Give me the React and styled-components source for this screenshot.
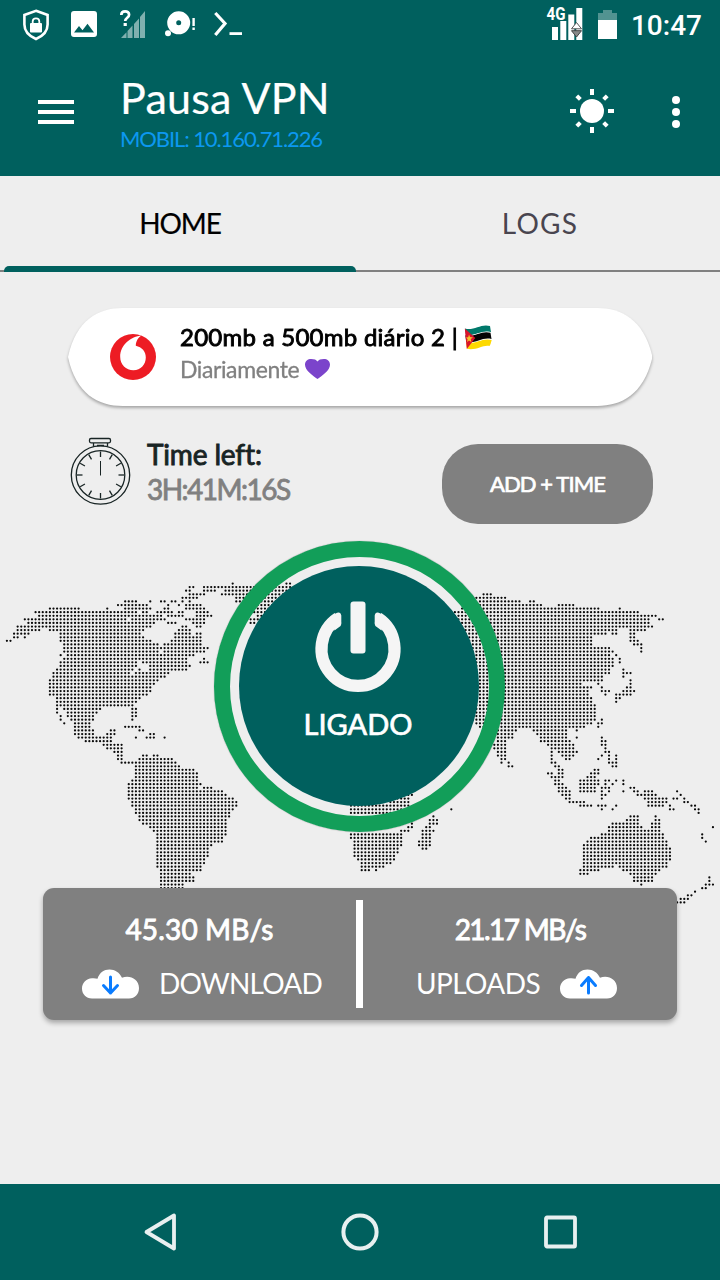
import React from "react";
import styled, { createGlobalStyle } from "styled-components";

const TEAL = "#00605e";
const GREY = "#808080";
const PAGE = "#eeeeee";

const GlobalStyle = createGlobalStyle`
  *, *::before, *::after { box-sizing: border-box; }
  body { margin: 0; background: ${PAGE}; }
  svg { display: block; flex: none; overflow: visible; }
`;

const Screen = styled.div`
  width: 720px;
  height: 1280px;
  display: flex;
  flex-direction: column;
  overflow: hidden;
  background: ${PAGE};
  font-family: Lato, "Liberation Sans", sans-serif;
`;

const Label = styled.span`
  display: block;
  margin: 0;
  white-space: nowrap;
  font-size: ${(p) => p.$size}px;
  line-height: ${(p) => p.$line || p.$size}px;
  font-weight: ${(p) => p.$weight || 400};
  letter-spacing: ${(p) => p.$track || 0}px;
  color: ${(p) => p.$color || "#fff"};
  -webkit-text-stroke: ${(p) => p.$heavy || 0}px currentColor;
`;

const StatusBar = styled.header`
  height: 48px;
  flex: none;
  display: flex;
  justify-content: space-between;
  padding: 0 18px 0 23px;
  background: ${TEAL};
`;

const StatusGroup = styled.div`
  display: flex;
  align-items: center;
  gap: ${(p) => p.$gap}px;
`;

const Clock = styled(Label)`
  font-family: Roboto, sans-serif;
  padding-top: 3px;
`;

const AppBar = styled.div`
  height: 128px;
  flex: none;
  display: flex;
  align-items: center;
  padding: 0 40px 0 38px;
  background: ${TEAL};
`;

const Titles = styled.div`
  flex: 1;
  padding: 8px 0 0 46px;
`;

const Actions = styled.div`
  display: flex;
  align-items: center;
  gap: 58px;
`;

const Tabs = styled.nav`
  height: 96px;
  flex: none;
  display: grid;
  grid-template-columns: 1fr 1fr;
  background: linear-gradient(${GREY}, ${GREY}) bottom / 100% 2px no-repeat;
`;

const Tab = styled.div`
  display: flex;
  flex-direction: column;
  align-items: center;
  justify-content: space-between;
  padding-top: 30px;
`;

const Indicator = styled.div`
  width: 352px;
  height: 6px;
  border-radius: 5px 5px 0 0;
  background: ${TEAL};
`;

const Main = styled.main`
  flex: 1;
  display: flex;
  flex-direction: column;
  padding-top: 36px;
`;

const PlanShadow = styled.div`
  margin: 0 68px;
  filter: drop-shadow(0 2px 1.5px rgba(0, 0, 0, 0.3));
`;

const PlanCard = styled.section`
  height: 98px;
  padding: 0 0 6px 42px;
  display: flex;
  align-items: center;
  gap: 24px;
  background: #fff;
  clip-path: path("M55 0H529C554 0 576 12 584.500 49C576 86 554 98 529 98H55C30 98 8 86 0 49C8 12 30 0 55 0Z");
  & > svg { margin-top: 6px; }
`;

const PlanLine = styled.div`
  display: flex;
  align-items: center;
  gap: 6px;
  height: ${(p) => p.$height}px;
`;

const TimerRow = styled.section`
  height: 118px;
  padding: 31px 67px 0 70px;
  display: flex;
  align-items: flex-start;
`;

const TimerText = styled.div`
  flex: 1;
  padding-left: 17px;
`;

const AddTime = styled.button`
  width: 211px;
  height: 80px;
  margin-top: 7px;
  padding: 0;
  border: 0;
  border-radius: 36px;
  display: grid;
  place-items: center;
  background: ${GREY};
  font-family: inherit;
`;

const Stage = styled.section`
  height: 364px;
  display: grid;
  justify-items: center;
  align-items: start;
  & > * { grid-area: 1 / 1; }
`;

const Ring = styled.div`
  width: 291px;
  height: 291px;
  margin: 17px 1px 0 0;
  border: 16px solid #129e59;
  border-radius: 50%;
  display: grid;
  justify-items: center;
  align-items: start;
  padding-top: 9px;
  box-shadow: 0 0 1px rgba(0, 0, 0, 0.5);
`;

const Disc = styled.button`
  width: 240px;
  height: 240px;
  margin-right: 1px;
  padding: 35px 2px 0 0;
  border: 0;
  border-radius: 50%;
  display: flex;
  flex-direction: column;
  align-items: center;
  gap: 14px;
  background: ${TEAL};
  font-family: inherit;
`;

const Stats = styled.section`
  position: relative;
  height: 132px;
  margin: 0 43px;
  padding: 12px 0;
  display: grid;
  grid-template-columns: 313px 7px 314px;
  background: ${GREY};
  border-radius: 11px;
  box-shadow: 0 3px 5px rgba(0, 0, 0, 0.3);
`;

const Divider = styled.div`
  background: #fff;
`;

const Stat = styled.div`
  display: flex;
  flex-direction: column;
  align-items: center;
  padding-top: 12px;
`;

const StatLine = styled.div`
  display: flex;
  align-items: center;
  gap: 20px;
  margin: 20px ${(p) => p.$right || 0}px 0 ${(p) => p.$left || 0}px;
  & > svg { margin-top: 2px; }
`;

const NavBar = styled.footer`
  height: 96px;
  flex: none;
  display: flex;
  align-items: center;
  justify-content: center;
  gap: 165px;
  background: ${TEAL};
`;

/* Each row lists runs of dots as "first-last" column indices. */
const WEST_ROWS = [
  "63 78-79", "51-52 55-79", "50-51 55-58 61-78", "51-55 60-77", "49-53 64-77",
  "33-36 40 43-44 46-47 49 51 64-76", "31-39 45 48 50-54 66-76", "12-20 28 33-40 44-45 50-55 68-76",
  "8-36 38-39 42-46 48-49 53-56 69-74", "9-43 45-49 53-57 70-73", "5-33 35-44 50-55 68-70", "6-41 45-47 52-55 68-69",
  "3-40 49-50 53-54", "3-9 12-38 48-51", "2-6 15-37 47-51 53-54", "2-3 5 15-38 47-54", "0-1 15-40 46-54",
  "16-42 44-54", "16-56", "16-42 44-55", "15 17-52", "16-48 49-50 55", "15-36 38-50 54-56", "15-36 40-51",
  "14-35 37 40-50", "13-34 36-45", "13-44", "12-42", "12-41", "12-40", "12-40", "12-39", "14-37", "14-36",
  "14-35", "14 16-26 35-36", "14 17-25 35-36", "15 17-24 35-36", "15 18-24 35", "16 19-23", "19-23 33-37",
  "19-24 29-30 37-38", "19-24 28-30 40-41", "20-29 36 39-41 44", "22-29", "27-32", "28-32", "30-32",
  "31-32 38-39 41-42", "31-32 37-46", "32-47", "36-48", "36-52", "36-53", "36-53", "35-53", "34-54",
  "34-53 55-57", "34-60", "34-61 112-113", "34-63 109-112", "35-64 107-112", "35-64 96-112", "36-63 96-111 124",
  "36-62 96-111", "37-62 119", "37-61 118-120", "38-61 113 118-120", "40-61 112-113 117-118", "41-61 110-112 116-119",
  "42-61 96-110 116-118", "42-60 96-110 116-118", "42-60 97-110 115-118", "42-57 97-110 115-118",
  "42-56 97-109 116-117", "42-56 97-109", "42-56 97-108", "42-55 98-108", "42-55 99-107", "42-54 99-105",
  "43-54 99-101 103", "43-51", "43-52", "43-52", "43-49", "43-49",
];

const EAST_ROWS = {
  3: "133-135", 4: "131-139", 5: "132-143 146-147", 6: "129-149 154-158", 7: "127-165 171", 8: "125-176",
  9: "124-181", 10: "124-179 182-183", 11: "124-179", 12: "124-180", 13: "124-170 174-178",
  14: "124-167 169-170 174-175", 15: "124-163 174-175", 16: "124-163 174-176", 17: "124-163 175-177",
  18: "124-168 177", 19: "124-169 177", 20: "124-168 170", 21: "124-169 171", 22: "124-169 171", 23: "124-169",
  24: "124-168 172", 25: "124-168 172-174", 26: "124-166 172", 27: "124-166 174", 28: "124-160 165 174",
  29: "124-163 166 173-174", 30: "124-162 166-168 172-175", 31: "124-162 167 170-174", 32: "124-163 170-171",
  33: "124-163 170", 34: "124-164", 35: "124-164", 36: "124-164", 37: "124-164", 38: "130-164 166",
  39: "131-163 165-166", 40: "132-161 165", 41: "136-142 147-156 159", 42: "137-141 148-156",
  43: "137-141 149-156 159 166", 44: "137-139 149-157 166-167", 45: "136-139 151-158 166-167", 46: "136-139 152-158 167",
  47: "137-139 152 154-159 167-168", 48: "137-139 152 155-158 166 168 170", 49: "138-139 152 156-157 165 168 170",
  50: "138 140 152-153 168-170", 51: "140-141 153-154 169-170", 52: "154-155 164-165",
  53: "151-152 154-155 163-165", 54: "152-155 162-164", 55: "153-154 160-165 167-168 170 172",
  56: "153-155 160-165 167 169 172", 57: "154-156 160-164 166-168 174-175", 58: "154-157 160-164 166 168 172 175-176 178-180 187",
  59: "155-157 166-167 176-181 188", 60: "156-157 166 178-184 186-187 189", 61: "157-161 179-184 189-190",
  62: "160-163 165-167 170 179-183 185 191-192", 63: "166 169 185-186 192-193", 64: "193", 65: "174-176 181",
  66: "173-176 181-182", 67: "169-176 180-182", 68: "168-177 180-182 197", 69: "168-182", 70: "166-183 194",
  71: "163-183 194", 72: "162-184 195", 73: "161-184", 74: "161-185", 75: "161-185", 76: "161-185", 77: "161-185",
  78: "161-184", 79: "161-169 171-184", 80: "160-165 172-182", 81: "160-162 174-181", 82: "175-180 196",
  83: "175-180 196", 84: "177 195-197", 85: "194-195", 86: "192", 87: "190-191", 88: "188-190", 89: "187-189",
};

const PITCH = 3.584;
function dotPath() {
  let d = "";
  for (let r = 0; r < 90; r++) {
    const runs = [WEST_ROWS[r], EAST_ROWS[r]].filter(Boolean).join(" ").split(" ");
    for (const run of runs) {
      const [a, b = a] = run.split("-").map(Number);
      for (let c = a; c <= b; c++) {
        d += `M${(6.9 + c * PITCH).toFixed(2)} ${(59.5 + r * PITCH).toFixed(2)}h0`;
      }
    }
  }
  return d;
}
const DOTS = dotPath();

const WorldMap = () => (
  <svg width="720" height="364" viewBox="0 0 720 364" aria-hidden="true">
    <path d={DOTS} stroke="#0a0a0a" strokeWidth="2.25" strokeLinecap="round" fill="none" />
  </svg>
);

const ShieldIcon = () => (
  <svg width="26" height="31" viewBox="23 8 26 31">
    <path d="M36 9.800 47.600 14v9.500c0 6.600-4.600 11.500-11.600 14.500-7-3-11.600-7.900-11.600-14.500V14z" fill="none" stroke="#fff" strokeWidth="2.600" />
    <rect x="30" y="22" width="12" height="9.500" rx="1" fill="#fff" />
    <path d="M32.700 22.500v-2.200a3.300 3 0 0 1 6.600 0v2.200" fill="none" stroke="#fff" strokeWidth="1.800" />
  </svg>
);
const ImageIcon = () => (
  <svg width="27" height="26" viewBox="0 0 27 26">
    <path fillRule="evenodd" fill="#fff" d="M3 0h20a3 3 0 0 1 3 3v20a3 3 0 0 1-3 3H3a3 3 0 0 1-3-3V3a3 3 0 0 1 3-3zM3 21.500h20l-6.500-8.800-5 6.500-3.500-4.300z" />
  </svg>
);
const UnknownSignalIcon = () => (
  <svg width="23" height="28" viewBox="120 10 23 28">
    <path d="M121 38l5.500-5.800V38zM127.500 31l5-5.500V38h-5zM134 24l5-5.600V38h-5zM140 17l5-6v27h-5z" fill="#fff" opacity=".5" />
    <path d="M121.300 15c0-5 7.800-4.700 7.800-.3 0 3-3.900 3-3.900 6.300" fill="none" stroke="#fff" strokeWidth="2.700" />
    <rect x="123.600" y="23" width="3.200" height="3" fill="#fff" />
  </svg>
);
const DiscIcon = () => (
  <svg width="27" height="26" viewBox="165 11 27 26">
    <circle cx="178.700" cy="22.800" r="7" fill="none" stroke="#fff" strokeWidth="9" />
    <circle cx="168" cy="33.300" r="3" fill="#fff" />
    <path d="M192.400 18h2.400v8h-2.400zM192.400 27.500h2.400V30h-2.400z" fill="#fff" />
  </svg>
);
const PromptIcon = () => (
  <svg width="28" height="24" viewBox="214 12 28 24">
    <path d="M215.300 13l9.700 10.500-9.700 11.500" fill="none" stroke="#fff" strokeWidth="3.200" />
    <rect x="229.500" y="32.200" width="12.500" height="2.800" fill="#fff" />
  </svg>
);
const CellIcon = () => (
  <svg width="38" height="34" viewBox="546 7 38 34">
    <path d="M552 27h6v13h-6zM560.300 21h6v19h-6zM568.300 14.500h6V40h-6zM576.300 8h6v32h-6z" fill="#fff" />
    <text x="546.500" y="19.800" fontFamily="Roboto, sans-serif" fontWeight="700" fontSize="18" textLength="19" lengthAdjust="spacingAndGlyphs" fill="#fff">4G</text>
    <path d="M576.500 22.500l5 6.300h-10z" fill="#fff" stroke="#555" strokeWidth="1" />
    <path d="M576.500 37l5-6.300h-10z" fill="#888" stroke="#444" strokeWidth="1" />
  </svg>
);
const BatteryIcon = () => (
  <svg width="19" height="29" viewBox="0 0 19 29">
    <path d="M0 3h5V0h9v3h5v7H0z" fill="#fff" opacity=".32" />
    <path d="M0 10h19v19H0z" fill="#fff" />
  </svg>
);
const MenuIcon = () => (
  <svg width="36" height="24" viewBox="0 0 36 24">
    <path d="M0 0h36v4H0zM0 10h36v4H0zM0 20h36v4H0z" fill="#fff" />
  </svg>
);
const SunIcon = () => (
  <svg width="44" height="46" viewBox="-22 -22 44 46">
    <circle r="12" fill="#fff" />
    {[0, 45, 90, 135, 180, 225, 270, 315].map((a) => (
      <rect key={a} x="-2" y={a % 90 ? -21.500 : -22} width="4" height={a % 90 ? 5 : 6} fill="#fff" transform={`rotate(${a})`} />
    ))}
  </svg>
);
const MoreIcon = () => (
  <svg width="8" height="32" viewBox="0 0 8 32">
    {[4, 16, 28].map((y) => <circle key={y} cx="4" cy={y} r="4" fill="#fff" />)}
  </svg>
);
const CarrierLogo = () => (
  <svg width="46" height="46" viewBox="110 334 46 46">
    <circle cx="133" cy="357" r="23" fill="#ed1c24" />
    <path d="M141.500 335.600C131 336.500 120.200 345 120.200 357c0 7.500 5.800 13.200 13.200 13.200s12.400-5.700 12.400-12.700c0-6.300-3.900-10.300-10-11.800 0-4.500 2.600-8.200 5.700-10.100z" fill="#fff" />
  </svg>
);
const FlagIcon = () => (
  <svg width="28" height="25" viewBox="465 327 28 25">
    <path d="M466 330.500c9 2.500 16-5.300 25-2.500l1 6.200c-9-2.400-16 5-25 2.800z" fill="#00796b" />
    <path d="M466.300 336.500c9 2.500 16-5.300 25.400-2.500l1.200 8c-9.500-2.500-16.500 5.300-25.700 3z" fill="#fff" />
    <path d="M466.300 337.300c9 2.500 16-5.300 25.200-2.500l1 6.200c-9-2.500-16.500 5.300-25.200 3z" fill="#050505" />
    <path d="M467 344.500c9 2.500 16-5.300 25.700-2.500-.8 3-1.300 5-2.200 6-6-1.800-13 4.800-22.500 2.800z" fill="#fdd900" />
    <path d="M465.800 330.500l10.500 9.500-8.500 11z" fill="#d9142b" />
    <path d="M470 336.500l1 2.500 3 .5-2.300 1.500.6 3-2.300-1.500-2 1.500.6-2.800-1.600-1.700 2.200-.3z" fill="#f4c22b" />
  </svg>
);
const HeartIcon = () => (
  <svg width="25" height="20" viewBox="0 0 25 20">
    <path d="M12.500 20C8 16.800 0 11.500 0 5.800 0 2 2.800 0 6.200 0c3 0 5.200.8 6.300 2.600C13.600.8 15.800 0 18.800 0 22.200 0 25 2 25 5.800 25 11.500 17 16.800 12.500 20z" fill="#7b44cb" />
  </svg>
);
const StopwatchIcon = () => (
  <svg width="60" height="69" viewBox="70 437 60 69" fill="none" stroke="#182424" strokeWidth="1.300">
    <rect x="89.500" y="438.500" width="21" height="4.300" rx="1.500" />
    <path d="M93.500 443v3.500M107.500 443v3.500M97 445.500h7" />
    <circle cx="100.500" cy="475" r="29.200" />
    <circle cx="100.500" cy="475" r="24.300" />
    <path d="M100.500 461v14.500" strokeWidth="1" />
    {Array.from({ length: 12 }, (_, i) => (
      <path key={i} d="M100.500 451.500v5.500" transform={`rotate(${i * 30} 100.500 475)`} />
    ))}
  </svg>
);
const PowerIcon = () => (
  <svg width="86" height="92" viewBox="315.500 600.500 86 92">
    <path d="M338.500 617.500A36.500 37 0 1 0 378.500 617.500" fill="none" stroke="#f5f5f5" strokeWidth="12.200" />
    <path d="M331.500 616.500l4.500-3.500q5-2.500 5.800 2v8.500q0 2-2.800 3.500l-4 3zM385.500 616.500l-4.500-3.500q-5-2.500-5.800 2v8.500q0 2 2.800 3.500l4 3z" fill="#f5f5f5" />
    <rect x="351" y="601" width="15" height="52" rx="3" fill="#f5f5f5" />
  </svg>
);
const CloudIcon = ({ up }) => (
  <svg width="57" height="30" viewBox="0 0 57 30">
    <path d="M10 29.500C4 29.500 0 25 0 19.500S4 9.500 10 9.200c2-.2 4 0 5.500.6C17.500 3.500 22 .5 27.500.5S37.500 3.500 40 8.800c7-3.300 17 .7 17 10.200 0 6-4 10.500-10 10.500z" fill="#fff" />
    <path
      d={up ? "M28.500 24V8.500M21.500 16.500l7-8 7 8" : "M28.500 8v16M21.500 16.500l7 7.500 7-7.500"}
      fill="none" stroke="#0a7cff" strokeWidth="3" strokeLinecap="round" strokeLinejoin="round"
    />
  </svg>
);
const BackIcon = () => (
  <svg width="32" height="38" viewBox="0 0 32 38">
    <path d="M30 2.500v33L2.500 19z" fill="none" stroke="#e8f0f0" strokeWidth="3.800" strokeLinejoin="round" />
  </svg>
);
const HomeIcon = () => (
  <svg width="38" height="38" viewBox="0 0 38 38">
    <circle cx="19" cy="19" r="16.600" fill="none" stroke="#e8f0f0" strokeWidth="4" />
  </svg>
);
const RecentIcon = () => (
  <svg width="33" height="34" viewBox="0 0 33 34">
    <rect x="2" y="2.500" width="29" height="29" rx="1" fill="none" stroke="#e8f0f0" strokeWidth="3.800" />
  </svg>
);

export default function App() {
  return (
    <Screen>
      <GlobalStyle />
      <StatusBar>
        <StatusGroup $gap={22}>
          <ShieldIcon />
          <ImageIcon />
          <UnknownSignalIcon />
          <DiscIcon />
          <PromptIcon />
        </StatusGroup>
        <StatusGroup $gap={14}>
          <CellIcon />
          <BatteryIcon />
          <Clock $size={28} $weight={500}>10:47</Clock>
        </StatusGroup>
      </StatusBar>

      <AppBar>
        <MenuIcon />
        <Titles>
          <Label as="h1" $size={43} $line={46} $track={0.25} $heavy={0.2}>Pausa VPN</Label>
          <Label $size={22} $line={36} $track={-1.1} $color="#0c98f0">MOBIL: 10.160.71.226</Label>
        </Titles>
        <Actions>
          <SunIcon />
          <MoreIcon />
        </Actions>
      </AppBar>

      <Tabs>
        <Tab>
          <Label $size={28} $line={34} $track={-1.1} $heavy={0.2} $color="#000">HOME</Label>
          <Indicator />
        </Tab>
        <Tab>
          <Label $size={28} $line={34} $track={1.3} $color="#49454f">LOGS</Label>
        </Tab>
      </Tabs>

      <Main>
        <PlanShadow>
          <PlanCard>
            <CarrierLogo />
            <div>
              <PlanLine $height={30}>
                <Label $size={24} $track={0.26} $heavy={0.9} $color="#000">200mb a 500mb diário 2 |</Label>
                <FlagIcon />
              </PlanLine>
              <PlanLine $height={34}>
                <Label $size={23} $track={-0.4} $heavy={0.3} $color={GREY}>Diariamente</Label>
                <HeartIcon />
              </PlanLine>
            </div>
          </PlanCard>
        </PlanShadow>

        <TimerRow>
          <StopwatchIcon />
          <TimerText>
            <Label $size={28} $line={35} $track={-0.15} $heavy={0.9} $color="#182424">Time left:</Label>
            <Label $size={28} $line={35} $track={-1.5} $heavy={0.8} $color={GREY}>3H:41M:16S</Label>
          </TimerText>
          <AddTime>
            <Label $size={22} $track={-0.9} $heavy={0.7}>ADD + TIME</Label>
          </AddTime>
        </TimerRow>

        <Stage>
          <WorldMap />
          <Ring>
            <Disc>
              <PowerIcon />
              <Label $size={29} $line={34} $heavy={0.7}>LIGADO</Label>
            </Disc>
          </Ring>
        </Stage>

        <Stats>
          <Stat>
            <Label $size={28} $line={34} $track={0.15} $heavy={0.9}>45.30 MB/s</Label>
            <StatLine $left={5}>
              <CloudIcon />
              <Label $size={28} $line={34} $track={-0.8}>DOWNLOAD</Label>
            </StatLine>
          </Stat>
          <Divider />
          <Stat>
            <Label $size={28} $line={34} $track={-1.6} $heavy={0.9}>21.17 MB/s</Label>
            <StatLine $right={7}>
              <Label $size={28} $line={34} $track={-0.6}>UPLOADS</Label>
              <CloudIcon up />
            </StatLine>
          </Stat>
        </Stats>
      </Main>

      <NavBar>
        <BackIcon />
        <HomeIcon />
        <RecentIcon />
      </NavBar>
    </Screen>
  );
}
